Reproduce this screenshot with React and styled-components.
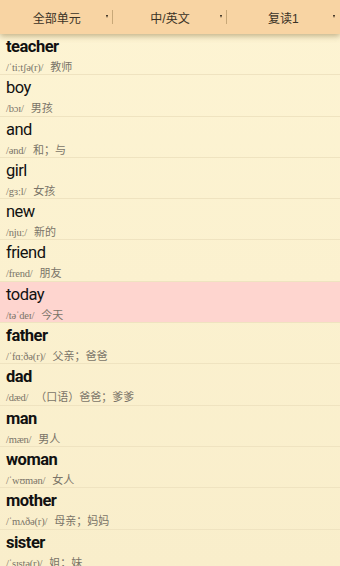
import React from 'react';
import styled, { createGlobalStyle } from 'styled-components';

const GlobalStyle = createGlobalStyle`
  html, body {
    margin: 0;
    padding: 0;
    background: #fcf1cf;
  }
  body {
    font-family: 'Liberation Sans', Arial, 'Noto Sans CJK SC', sans-serif;
  }
`;

const Screen = styled.div`
  width: 340px;
  height: 566px;
  overflow: hidden;
  position: relative;
  background: linear-gradient(#fdf4d3, #f9eecb);
`;

const TopBar = styled.div`
  position: relative;
  z-index: 2;
  display: flex;
  height: 34px;
  background: #f8d4a3;
  box-shadow: 0 2px 6px rgba(120, 90, 40, 0.45);
`;

const Dropdown = styled.div`
  position: relative;
  flex: 1;
  display: flex;
  align-items: center;
  justify-content: center;
  font-family: 'Liberation Sans', 'Noto Sans CJK SC', sans-serif;
  font-size: 12px;
  color: #3a3226;
`;

const Arrow = styled.span`
  position: absolute;
  right: 5px;
  top: 15px;
  width: 0;
  height: 0;
  border-left: 1.5px solid transparent;
  border-right: 1.5px solid transparent;
  border-top: 3px solid #2a2218;
`;

const Divider = styled.span`
  position: absolute;
  right: 0;
  top: 10px;
  width: 1px;
  height: 14px;
  background: #c8a878;
`;

const List = styled.div`
  display: flex;
  flex-direction: column;
`;

const Row = styled.div`
  box-sizing: border-box;
  height: 41.3px;
  padding: 3px 6px 0;
  border-bottom: 1px solid #efe3c0;
  background: ${p => (p.$active ? '#fed5cf' : 'transparent')};
`;

const Word = styled.div`
  font-family: Roboto, 'Liberation Sans', sans-serif;
  font-size: 16.5px;
  line-height: 20px;
  letter-spacing: -0.5px;
  font-weight: ${p => (p.$bold ? 700 : 400)};
  color: #111;
`;

const Detail = styled.div`
  display: flex;
  align-items: baseline;
  gap: 7px;
  margin-top: 1px;
  color: #7a7468;
  white-space: nowrap;
`;

const Phonetic = styled.span`
  font-family: 'Liberation Serif', 'Times New Roman', serif;
  font-size: 10.5px;
  letter-spacing: -0.2px;
`;

const Meaning = styled.span`
  font-family: 'Noto Sans CJK SC', sans-serif;
  font-size: 11px;
`;

const words = [
  { w: 'teacher', p: "/ˈtiːtʃə(r)/", m: '教师', b: true },
  { w: 'boy', p: '/bɔɪ/', m: '男孩' },
  { w: 'and', p: '/ənd/', m: '和；与' },
  { w: 'girl', p: '/gɜːl/', m: '女孩' },
  { w: 'new', p: '/njuː/', m: '新的' },
  { w: 'friend', p: '/frend/', m: '朋友' },
  { w: 'today', p: '/təˈdeɪ/', m: '今天', active: true },
  { w: 'father', p: "/ˈfɑːðə(r)/", m: '父亲；爸爸', b: true },
  { w: 'dad', p: '/dæd/', m: '（口语）爸爸；爹爹', b: true },
  { w: 'man', p: '/mæn/', m: '男人', b: true },
  { w: 'woman', p: "/ˈwʊmən/", m: '女人', b: true },
  { w: 'mother', p: "/ˈmʌðə(r)/", m: '母亲；妈妈', b: true },
  { w: 'sister', p: "/ˈsɪstə(r)/", m: '姐；妹', b: true },
];

const App = () => {
  return (
    <Screen>
      <GlobalStyle />
      <TopBar>
        <Dropdown>
          全部单元
          <Arrow />
          <Divider />
        </Dropdown>
        <Dropdown>
          中/英文
          <Arrow />
          <Divider />
        </Dropdown>
        <Dropdown>
          复读1
          <Arrow />
        </Dropdown>
      </TopBar>
      <List>
        {words.map(item => (
          <Row key={item.w} $active={item.active}>
            <Word $bold={item.b}>{item.w}</Word>
            <Detail>
              <Phonetic>{item.p}</Phonetic>
              <Meaning>{item.m}</Meaning>
            </Detail>
          </Row>
        ))}
      </List>
    </Screen>
  );
};

export default App;
